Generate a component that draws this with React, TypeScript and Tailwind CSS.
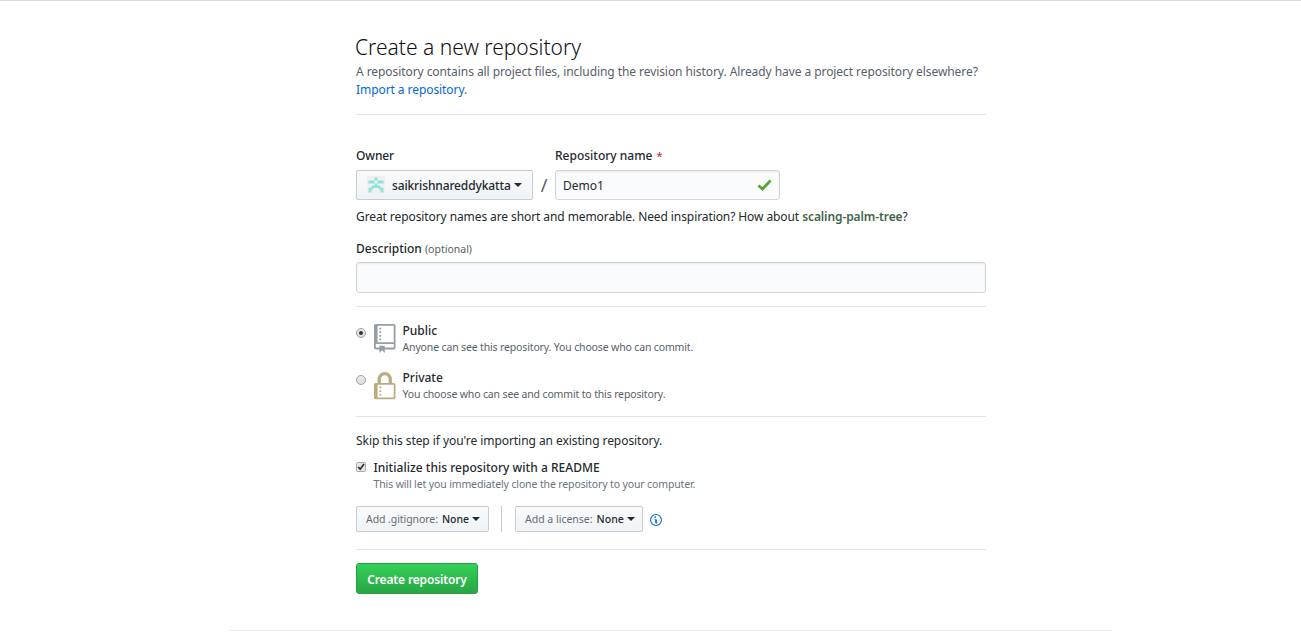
import type { ReactNode } from "react";

function Caret() {
  return <span className="inline-block border-x-4 border-t-4 border-x-transparent border-t-[#24292e]" />;
}

function RepoIcon() {
  return (
    <svg className="block h-[29px] w-[21.5px]" viewBox="0 0 12 16" preserveAspectRatio="none" fill="#959da5">
      <path fillRule="evenodd" d="M4 9H3V8h1v1zm0-3H3v1h1V6zm0-2H3v1h1V4zm0-2H3v1h1V2zm8-1v12c0 .55-.45 1-1 1H6v2l-1.5-1.5L3 16v-2H1c-.55 0-1-.45-1-1V1c0-.55.45-1 1-1h10c.55 0 1 .45 1 1zm-1 10H1v2h2v-1h3v1h5v-2zm0-10H2v9h9V1z" />
    </svg>
  );
}

function LockIcon() {
  return (
    <svg className="mt-px block h-[29px] w-[21.5px]" viewBox="0 0 12 16" preserveAspectRatio="none" fill="#b9ab82">
      <path fillRule="evenodd" d="M4 13H3v-1h1v1zm8-6v7c0 .55-.45 1-1 1H1c-.55 0-1-.45-1-1V7c0-.55.45-1 1-1h1V4c0-2.2 1.8-4 4-4s4 1.8 4 4v2h1c.55 0 1 .45 1 1zM3.8 6h4.41V4c0-1.22-.98-2.2-2.2-2.2-1.22 0-2.2.98-2.2 2.2v2H3.800zM11 7H2v7h9V7zM4 8H3v1h1V8zm0 2H3v1h1v-1z" />
    </svg>
  );
}

function Identicon() {
  return (
    <svg className="block h-[18px] w-[18px]" viewBox="0 0 18 18">
      <rect width="18" height="18" fill="#f0f0f0" />
      <path
        fill="#92e3d8"
        d="M7.500 1.500h3v3h-3zM1.500 4.500h6v3h-6zM10.500 4.500h6v3h-6zM7.500 7.500h3v3h-3zM4.500 9.500h9v2.500h-9zM1.500 11.500h5v2h-5zM11.500 11.500h5v2h-5zM1.500 13.500h3v3h-3zM13.500 13.500h3v3h-3z"
      />
    </svg>
  );
}

function Radio({ checked = false }: { checked?: boolean }) {
  return (
    <span className="flex h-[10px] w-[10px] items-center justify-center rounded-full border border-[#a0a0a0] bg-linear-to-b from-[#ececec] to-[#dcdcdc]">
      {checked && <span className="h-1 w-1 rounded-full bg-[#333]" />}
    </span>
  );
}

function Visibility({ checked, icon, title, note }: { checked?: boolean; icon: ReactNode; title: string; note: string }) {
  return (
    <label className="flex h-[47px]">
      <span className="w-[18px] pt-1">
        <Radio checked={checked} />
      </span>
      <span className="w-[28.500px]">{icon}</span>
      <span className="flex flex-col whitespace-nowrap">
        <span className="h-4 leading-[14px] font-medium">{title}</span>
        <span className="text-[10.500px] leading-[14px] tracking-[-0.15px] text-[#586069]">{note}</span>
      </span>
    </label>
  );
}

const selectButton =
  "flex items-center whitespace-nowrap rounded-[2px] border border-[#c9cccf] bg-linear-to-b from-[#fafbfc] to-[#eff3f6]";

export default function App() {
  return (
    <div className="h-[632px] overflow-hidden border-t border-[#dcdcdc] bg-white font-['Noto_Sans','Open_Sans',sans-serif] text-[12px] text-[#24292e]">
      <main className="ml-[356px] flex w-[630px] flex-col">
        <header className="h-[114px] border-b border-[#e1e4e8] pt-[32px] whitespace-nowrap">
          <h1 className="-ml-px h-[30px] text-[21px] leading-7 font-light text-[#0d1116]">Create a new repository</h1>
          <p className="text-[12px] leading-[18px] tracking-[-0.07px] text-[#586069]">
            A repository contains all project files, including the revision history. Already have a project repository elsewhere?
            <br />
            <a className="text-[#0366d6]">Import a repository</a>.
          </p>
        </header>

        <section className="h-[192px] border-b border-[#e1e4e8] pt-[32px] whitespace-nowrap">
          <div className="flex">
            <div className="w-[177px]">
              <div className="h-[23px] leading-[18px] font-medium tracking-[-0.1px]">Owner</div>
              <button className={`${selectButton} h-[30px] w-[177px] pl-[10px]`}>
                <Identicon />
                <span className="mr-[3px] ml-[7px] pt-px font-medium tracking-[-0.13px]">saikrishnareddykatta</span>
                <Caret />
              </button>
            </div>
            <div className="w-[22px] pt-[28px] text-center text-[18px] leading-5 text-[#586069]">/</div>
            <div className="w-[225px]">
              <div className="h-[23px] leading-[18px] font-medium">
                Repository name <span className="ml-px text-[11px] font-normal text-[#cb2431]">*</span>
              </div>
              <div className="flex h-[30px] items-center justify-between rounded-[3px] border border-[#d1d5da] bg-[#fafbfc] pr-[7px] pl-[7px] shadow-[inset_0_1px_2px_rgba(27,31,35,0.075)]">
                <span className="pt-px">Demo1</span>
                <svg className="h-3 w-[15px]" viewBox="0 0 15 12">
                  <path d="M1.500 6.500l4 3.500L13.500 1.500" fill="none" stroke="#55a532" strokeWidth="2.8" />
                </svg>
              </div>
            </div>
          </div>
          <p className="mt-2 h-[32px] leading-[18px] tracking-[-0.09px]">
            Great repository names are short and memorable. Need inspiration? How about{" "}
            <span className="font-semibold text-[#41644a]">scaling-palm-tree</span>?
          </p>
          <div className="h-[22px] leading-[18px] font-medium">
            Description <span className="text-[10.500px] font-normal text-[#586069]">(optional)</span>
          </div>
          <div className="h-[31px] rounded-[3px] border border-[#d1d5da] bg-[#fafbfc] shadow-[inset_0_1px_2px_rgba(27,31,35,0.075)]" />
        </section>

        <section className="h-[110px] border-b border-[#e1e4e8] pt-[17px]">
          <Visibility
            checked
            icon={<RepoIcon />}
            title="Public"
            note="Anyone can see this repository. You choose who can commit."
          />
          <Visibility icon={<LockIcon />} title="Private" note="You choose who can see and commit to this repository." />
        </section>

        <section className="h-[133px] border-b border-[#e1e4e8] pt-[15px] whitespace-nowrap">
          <p className="h-[27px] leading-[18px] tracking-[-0.06px]">Skip this step if you're importing an existing repository.</p>
          <label className="flex h-[47px]">
            <span className="w-[17.500px] pt-[3px]">
              <svg className="block h-[10px] w-[10px]" viewBox="0 0 10 10">
                <rect x=".5" y=".5" width="9" height="9" rx="1" fill="#e6e6e6" stroke="#a9a9a9" />
                <path d="M2.200 5l2 2.200L8 2" fill="none" stroke="#333" strokeWidth="1.8" />
              </svg>
            </span>
            <span className="flex flex-col">
              <span className="h-[17px] leading-[18px] font-medium tracking-[0.03px]">Initialize this repository with a README</span>
              <span className="text-[10.500px] leading-4 tracking-[-0.13px] text-[#6a737d]">
                This will let you immediately clone the repository to your computer.
              </span>
            </span>
          </label>
          <div className="flex items-center text-[10.500px]">
            <button className={`${selectButton} h-[26px] w-[133px] pl-[9px]`}>
              <span className="pt-px tracking-[-0.07px] text-[#666c73]">Add .gitignore:</span>
              <span className="mr-[3px] ml-1 pt-px font-medium">None</span>
              <Caret />
            </button>
            <span className="mr-[13px] ml-3 h-[26px] w-px bg-[#c6cbd1]" />
            <button className={`${selectButton} h-[26px] w-[128px] pl-[9px]`}>
              <span className="pt-px text-[#666c73]">Add a license:</span>
              <span className="mr-[3px] ml-1 pt-px font-medium">None</span>
              <Caret />
            </button>
            <svg className="mt-px ml-[7px] h-3 w-3" viewBox="0 0 14 14" fill="#0366d6">
              <path fillRule="evenodd" d="M5.300 4.400c-.2-.2-.3-.4-.3-.7 0-.3.100-.5.300-.7.200-.2.400-.3.700-.3.300 0 .5.100.7.300.2.200.3.400.3.700 0 .3-.100.500-.3.700-.2.200-.4.300-.7.300-.3 0-.5-.1-.7-.3zM8 7c0-.5-.5-1-1-1H6c-.5 0-1 .5-1 1h1v3c0 .5.500 1 1 1h1c.5 0 1-.5 1-1H8V7zM7 1.300a5.700 5.700 0 1 0 0 11.400A5.700 5.700 0 0 0 7 1.300zM7 0a7 7 0 1 1 0 14A7 7 0 0 1 7 0z" />
            </svg>
          </div>
        </section>

        <button className="mt-[13px] h-[31px] w-[122px] rounded-[3px] border border-[#269f42] bg-linear-to-b from-[#34d058] to-[#28a745] pt-[3px] text-center leading-[18px] font-semibold tracking-[-0.15px] whitespace-nowrap text-white">
          Create repository
        </button>
      </main>
      <footer className="mt-9 ml-[229px] h-px w-[883px] bg-[#eaecef]" />
    </div>
  );
}
